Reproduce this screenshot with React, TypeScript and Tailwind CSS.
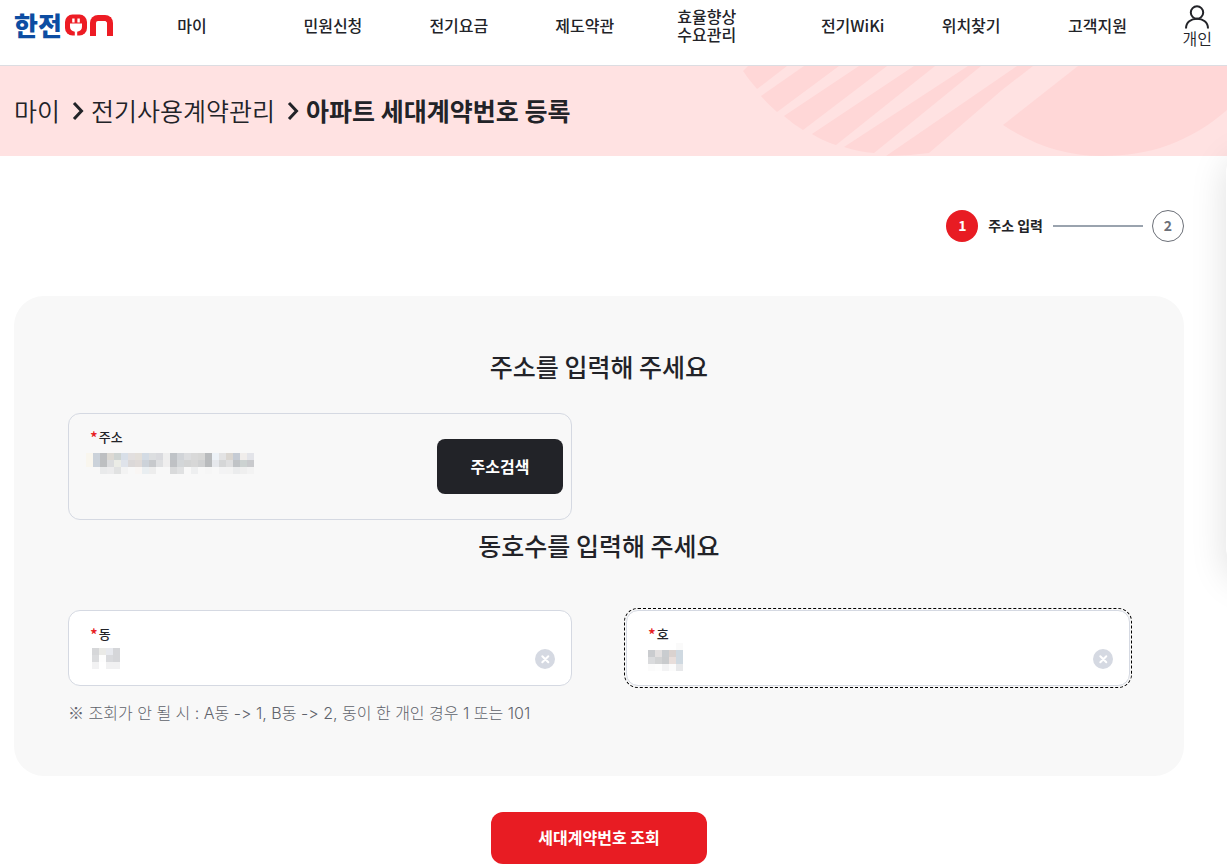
import React, { Fragment, useState } from 'react';

const NAV: { lines: string[]; cell?: string }[] = [
  { lines: ['마이'] },
  { lines: ['민원신청'] },
  { lines: ['전기요금'] },
  { lines: ['제도약관'] },
  { lines: ['효율향상', '수요관리'], cell: 'pr-8' },
  { lines: ['전기WiKi'] },
  { lines: ['위치찾기'] },
  { lines: ['고객지원'] },
];

function Mosaic({ rows, place }: { rows: string[][]; place: string }) {
  const cols = Math.max(...rows.map((r) => r.length));
  return (
    <svg
      className={`pointer-events-none absolute ${place}`}
      width={cols * 7}
      height={rows.length * 7}
      shapeRendering="crispEdges"
      aria-hidden="true"
    >
      {rows.map((row, y) =>
        row.map((fill, x) =>
          fill ? <rect key={`${x}-${y}`} x={x * 7} y={y * 7} width="7" height="7" fill={fill} /> : null,
        ),
      )}
    </svg>
  );
}

const ADDRESS_MOSAIC = [
  ['#f9f6ee', '#cbd2da', '#bdbfc1', '#dcd9d3', '#ced4d2', '#d8dfe8', '#e2dfdf', '#e3dfda', '#d3dbe4', '#dcdee0', '#d9dade', '#eeeeee', '#bfc3c7', '#d1d4d8', '#dcdddf', '#d9d9d9', '#d7d7d6', '#b9bbbd', '#edf2f7', '#e3e3e4', '#dad6d1', '#c5cbd4', '#f0edeb', '#e3e4e9'],
  ['#f9f6ee', '#cbd2da', '#bdbfc1', '#dbdcde', '#ebece6', '#dfe3ea', '#dbd8d8', '#dfdad8', '#ccd2d9', '#c7c9cc', '#dedfe1', '#efeeee', '#bfc1c4', '#d3d6d8', '#d3d4d4', '#d7d7d7', '#d0d1d2', '#b9bbbd', '#e6e8ec', '#d5d6d7', '#dfdfe0', '#c0c3c6', '#ccd2d1', '#c9cacd'],
  ['', '', '#e9eaeb', '#ececed', '#e1e2e2', '#f3f3f3', '', '#f9f6f4', '#e9eef1', '#ededed', '', '', '#d9dadb', '#e0e1e2', '', '#eeeff0', '', '#f6f6f6', '', '#f3f3f4', '#f3f3f3', '#ebeced', '#efefef', '#f3f3f3'],
];
const DONG_MOSAIC = [
  ['#d6d7d9', '#eaeae7', '#e7e9ee', '#d5d6d9'],
  ['#dbdcde', '#fdfdfd', '#d9dadd', '#d5d6d9'],
  ['#f2f2f3', '', '#f1f1f2', '#f1f1f2'],
];
const HO_MOSAIC = [
  ['', '', '', '', '#fafafa'],
  ['#cacccf', '#e3e0e0', '#c9cccf', '#dad2cf', '#cfd9e1'],
  ['#dadbdd', '#d2d3d4', '#c9cbcd', '#e8dedb', '#cfd9e1'],
  ['#fbfbfb', '#fdfdfd', '#f3f3f4', '#fbfbfb', '#e7e8ea'],
];

function Label({ id, children }: { id: string; children: string }) {
  return (
    <label htmlFor={id} className="flex gap-px text-[13px] font-medium leading-[18px]">
      <span className="text-base font-medium leading-[18px] text-[#e81c23]">*</span>
      {children}
    </label>
  );
}

type UnitFieldProps = { id: string; label: string; mosaic: string[][]; place: string; focused?: boolean };

function UnitField({ id, label, mosaic, place, focused }: UnitFieldProps) {
  const [value, setValue] = useState('');
  return (
    <div
      className={`rounded-xl border border-[#d5d9e2] bg-white pb-3.5 pl-[21px] pr-4 pt-3.5 ${
        focused ? 'outline-1 outline-offset-1 outline-dashed outline-black' : ''
      }`}
    >
      <Label id={id}>{label}</Label>
      <div className="mt-1 flex items-center">
        <div className="relative flex-1">
          <input
            id={id}
            value={value}
            onChange={(e) => setValue(e.target.value)}
            className="block h-6 w-full bg-transparent text-base outline-none"
          />
          {value === '' && <Mosaic rows={mosaic} place={place} />}
        </div>
        <button type="button" aria-label={`${label} 지우기`} onClick={() => setValue('')}>
          <svg width="20" height="20" viewBox="0 0 20 20" className="block">
            <circle cx="10" cy="10" r="10" fill="#d5d9e2" />
            <path d="M7.300 7.300l6 6M13.300 7.300l-6 6" stroke="#fff" strokeWidth="2" strokeLinecap="round" />
          </svg>
        </button>
      </div>
    </div>
  );
}

function Chevron() {
  return (
    <svg className="ml-3 mr-[7px] shrink-0" width="12" height="20" viewBox="0 0 12 20" fill="none" aria-hidden="true">
      <path d="M2 3l7.500 8L2 19" stroke="#222328" strokeWidth="3" />
    </svg>
  );
}

function Logo() {
  return (
    <a href="#home" aria-label="한전ON" className="flex w-[100px] shrink-0 items-center">
      <span className="w-12 text-[26px] font-black leading-5 text-[#0c4da2]">한전</span>
      <svg className="ml-[3px] block" width="22" height="22" viewBox="0 0 22 22" aria-hidden="true">
        <rect width="22" height="21" y="0.5" rx="7.500" fill="#ed1c24" />
        <path d="M5 9.500h12v3a6 5.200 0 0 1-4.800 5.200V22H9.800v-4.300A6 5.200 0 0 1 5 12.500z" fill="#fff" />
        <rect x="7.200" y="4.500" width="2.400" height="4" fill="#fff" />
        <rect x="12.400" y="4.500" width="2.400" height="4" fill="#fff" />
      </svg>
      <span className="ml-[3px] h-[21px] w-[23px] rounded-t-lg border-x-6 border-t-6 border-[#ed1c24]" />
    </a>
  );
}

export default function App() {
  const [address, setAddress] = useState('');
  return (
    <div className="relative overflow-hidden bg-white pb-0.5 font-['Noto_Sans_CJK_KR','Noto_Sans',sans-serif] text-[#222328]">
      <header className="flex h-[66px] border-b border-[#dcdde2] pl-3.5 pr-[15px]">
        <div className="flex h-[50px] items-center">
          <Logo />
        </div>
        <nav className="grid h-[50px] flex-1 grid-cols-[156fr_126fr_126fr_126fr_150fr_110fr_127fr_126fr] items-center">
          {NAV.map((item) => (
            <a key={item.lines[0]} href="#menu" className={`text-center font-medium leading-[18px] ${item.cell ?? ''}`}>
              {item.lines.map((line, i) => (
                <Fragment key={line}>
                  {i > 0 && <br />}
                  {line}
                </Fragment>
              ))}
            </a>
          ))}
        </nav>
        <a href="#account" className="ml-[22px] flex flex-col items-center pt-[5px] font-[350] leading-[18px]">
          <svg width="24" height="24" viewBox="0 0 24 24" fill="none" stroke="#222328" strokeWidth="2" aria-hidden="true">
            <circle cx="12" cy="7.500" r="6.200" />
            <path d="M1 23.500C1 17 6 13.800 12 13.800S23 17 23 23.500" />
          </svg>
          개인
        </a>
      </header>

      <section className="relative flex h-[90px] items-center bg-[#ffe2e2] pb-0.5 pl-3.5">
        <svg className="absolute right-0 top-0" width="487" height="90" viewBox="0 0 487 90" fill="#ffd7d7" aria-hidden="true">
          <path d="M8 0H47L17 23Q9 14 3 5z" />
          <path d="M64 0H99L37 46Q28 38 21 30z" />
          <path d="M119 0H147L63 64Q53 58 44 50z" />
          <path d="M174 0H195L96 79Q83 75 72 68z" />
          <path d="M228 0H241L134 87Q119 86 104 81z" />
          <path d="M277 0H293L262 24L189 87Q168 90 146 90z" />
          <path d="M338 0H487V44C450 76 410 90 362 90C325 90 292 78 263 59z" />
        </svg>
        <h1 className="relative flex items-center text-[25px] leading-9">
          <a href="#my" className="font-[350]">마이</a>
          <Chevron />
          <a href="#contract" className="font-[350]">전기사용계약관리</a>
          <Chevron />
          <span className="font-bold">아파트 세대계약번호 등록</span>
        </h1>
      </section>

      <main className="flex flex-col pl-3.5 pr-[43px] pt-[54px]">
        <ol className="flex items-center self-end text-sm font-bold">
          <li className="flex items-center">
            <span className="flex size-8 items-center justify-center rounded-full bg-[#e81c23] pb-0.5 text-white">1</span>
            <span className="ml-2.5 pb-0.5">주소 입력</span>
          </li>
          <li className="flex items-center">
            <span className="ml-2.5 mr-[9px] h-0.5 w-[90px] bg-[#9aa3ae]" />
            <span className="flex size-8 items-center justify-center rounded-full border border-[#6c7078] pb-0.5 text-[#6c7078]">2</span>
          </li>
        </ol>

        <form className="mt-[54px] flex flex-col" onSubmit={(e) => e.preventDefault()}>
          <div className="rounded-[30px] bg-[#f8f8f8] px-[54px] pb-[51px] pt-[52px]">
            <h2 className="text-center text-[25px] font-medium leading-9">주소를 입력해 주세요</h2>
            <div className="mt-[29px] grid grid-cols-2 gap-[54px]">
              <div className="flex items-center rounded-xl border border-[#d5d9e2] pl-[21px] pr-2">
                <div className="flex-1 pb-[45px] pt-3.5">
                  <Label id="address">주소</Label>
                  <div className="relative mt-1">
                    <input
                      id="address"
                      value={address}
                      onChange={(e) => setAddress(e.target.value)}
                      className="block h-6 w-full bg-transparent text-base outline-none"
                    />
                    {address === '' && <Mosaic rows={ADDRESS_MOSAIC} place="-left-1 top-[3px]" />}
                  </div>
                </div>
                <button type="button" className="h-[55px] w-[126px] rounded-lg bg-[#222328] pb-0.5 font-bold text-white">
                  주소검색
                </button>
              </div>
            </div>
            <h2 className="mt-[7px] text-center text-[25px] font-medium leading-9">동호수를 입력해 주세요</h2>
            <div className="mt-[47px] grid grid-cols-2 gap-[54px]">
              <UnitField id="dong" label="동" mosaic={DONG_MOSAIC} place="left-0.5 top-px" />
              <UnitField id="ho" label="호" mosaic={HO_MOSAIC} place="left-0 -top-1" focused />
            </div>
            <p className="mt-[15px] font-['Inter','Noto_Sans_CJK_KR',sans-serif] font-light leading-6 text-[#5f636b] [font-variant-ligatures:none]">
              <span className="font-['Noto_Sans_CJK_KR',sans-serif] leading-none">※</span> 조회가 안 될 시 : A동 -&gt; 1, B동 -&gt; 2, 동이 한 개인 경우 1 또는 101
            </p>
          </div>
          <button type="submit" className="mt-9 h-[52px] w-[216px] self-center rounded-xl bg-[#e81c23] pb-0.5 font-bold text-white">
            세대계약번호 조회
          </button>
        </form>
      </main>

      <aside className="absolute -right-20 top-[148px] h-[424px] w-[81px] rounded-3xl bg-white shadow-[0_10px_36px_rgba(0,0,0,0.13)]" />
    </div>
  );
}
